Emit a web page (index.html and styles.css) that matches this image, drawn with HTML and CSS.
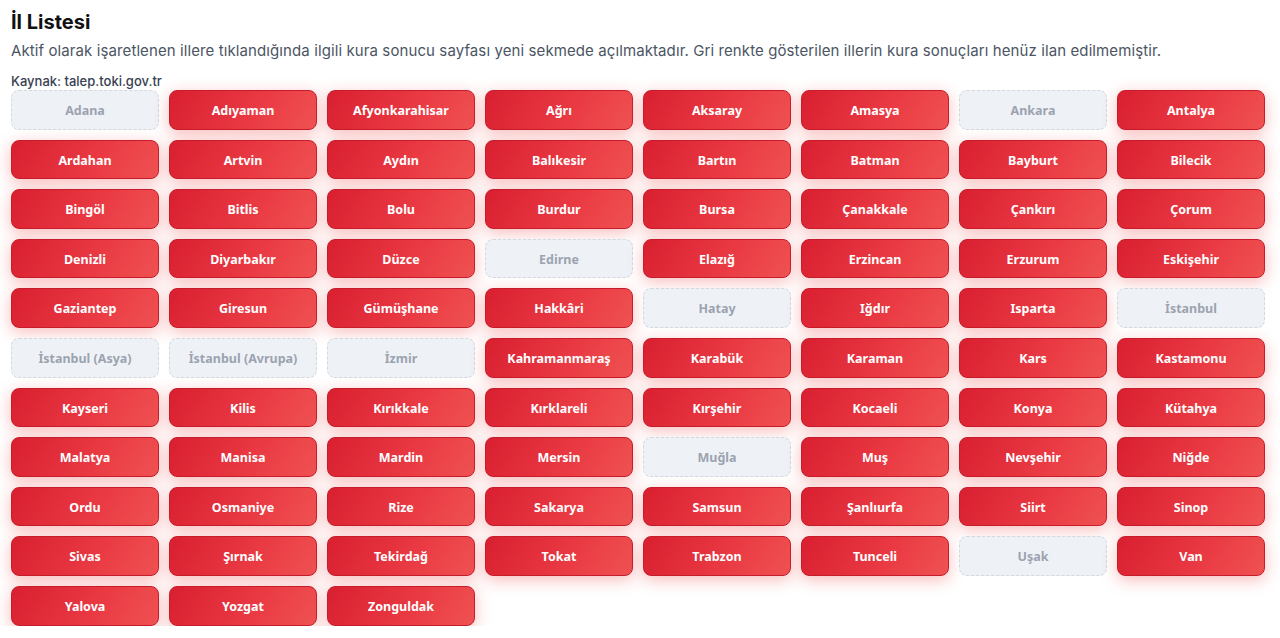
FILE: index.html
```html
<!DOCTYPE html>
<html lang="tr">
<head>
<meta charset="utf-8">
<title>İl Listesi</title>
<link rel="stylesheet" href="styles.css">
</head>
<body>
<div class="page">
  <h2 class="title">İl Listesi</h2>
  <p class="desc">Aktif olarak işaretlenen illere tıklandığında ilgili kura sonucu sayfası yeni sekmede açılmaktadır. Gri renkte gösterilen illerin kura sonuçları henüz ilan edilmemiştir.</p>
  <p class="source">Kaynak: talep.toki.gov.tr</p>
  <div class="grid">
    <span class="city off">Adana</span>
    <a class="city on">Adıyaman</a>
    <a class="city on">Afyonkarahisar</a>
    <a class="city on">Ağrı</a>
    <a class="city on">Aksaray</a>
    <a class="city on">Amasya</a>
    <span class="city off">Ankara</span>
    <a class="city on">Antalya</a>
    <a class="city on">Ardahan</a>
    <a class="city on">Artvin</a>
    <a class="city on">Aydın</a>
    <a class="city on">Balıkesir</a>
    <a class="city on">Bartın</a>
    <a class="city on">Batman</a>
    <a class="city on">Bayburt</a>
    <a class="city on">Bilecik</a>
    <a class="city on">Bingöl</a>
    <a class="city on">Bitlis</a>
    <a class="city on">Bolu</a>
    <a class="city on">Burdur</a>
    <a class="city on">Bursa</a>
    <a class="city on">Çanakkale</a>
    <a class="city on">Çankırı</a>
    <a class="city on">Çorum</a>
    <a class="city on">Denizli</a>
    <a class="city on">Diyarbakır</a>
    <a class="city on">Düzce</a>
    <span class="city off">Edirne</span>
    <a class="city on">Elazığ</a>
    <a class="city on">Erzincan</a>
    <a class="city on">Erzurum</a>
    <a class="city on">Eskişehir</a>
    <a class="city on">Gaziantep</a>
    <a class="city on">Giresun</a>
    <a class="city on">Gümüşhane</a>
    <a class="city on">Hakkâri</a>
    <span class="city off">Hatay</span>
    <a class="city on">Iğdır</a>
    <a class="city on">Isparta</a>
    <span class="city off">İstanbul</span>
    <span class="city off">İstanbul (Asya)</span>
    <span class="city off">İstanbul (Avrupa)</span>
    <span class="city off">İzmir</span>
    <a class="city on">Kahramanmaraş</a>
    <a class="city on">Karabük</a>
    <a class="city on">Karaman</a>
    <a class="city on">Kars</a>
    <a class="city on">Kastamonu</a>
    <a class="city on">Kayseri</a>
    <a class="city on">Kilis</a>
    <a class="city on">Kırıkkale</a>
    <a class="city on">Kırklareli</a>
    <a class="city on">Kırşehir</a>
    <a class="city on">Kocaeli</a>
    <a class="city on">Konya</a>
    <a class="city on">Kütahya</a>
    <a class="city on">Malatya</a>
    <a class="city on">Manisa</a>
    <a class="city on">Mardin</a>
    <a class="city on">Mersin</a>
    <span class="city off">Muğla</span>
    <a class="city on">Muş</a>
    <a class="city on">Nevşehir</a>
    <a class="city on">Niğde</a>
    <a class="city on">Ordu</a>
    <a class="city on">Osmaniye</a>
    <a class="city on">Rize</a>
    <a class="city on">Sakarya</a>
    <a class="city on">Samsun</a>
    <a class="city on">Şanlıurfa</a>
    <a class="city on">Siirt</a>
    <a class="city on">Sinop</a>
    <a class="city on">Sivas</a>
    <a class="city on">Şırnak</a>
    <a class="city on">Tekirdağ</a>
    <a class="city on">Tokat</a>
    <a class="city on">Trabzon</a>
    <a class="city on">Tunceli</a>
    <span class="city off">Uşak</span>
    <a class="city on">Van</a>
    <a class="city on">Yalova</a>
    <a class="city on">Yozgat</a>
    <a class="city on">Zonguldak</a>
  </div>
</div>
</body>
</html>
```
FILE: styles.css
```css
html, body {
  margin: 0;
  padding: 0;
  background: #ffffff;
}
.page {
  width: 1254px;
  padding: 8px 15px 0 11px;
  font-family: "Inter", "Noto Sans", sans-serif;
}
.title {
  margin: 0;
  font-size: 20px;
  line-height: 28px;
  font-weight: 700;
  color: #111111;
}
.desc {
  margin: 4px 0 0;
  font-size: 15px;
  line-height: 22px;
  letter-spacing: 0.1px;
  color: #4b5563;
}
.source {
  margin: 10px 0 0;
  font-size: 13px;
  line-height: 18px;
  font-weight: 500;
  color: #374151;
}
.grid {
  margin-top: 0;
  display: grid;
  grid-template-columns: repeat(8, 148px);
  column-gap: 10px;
  row-gap: 10px;
}
.city {
  display: block;
  box-sizing: border-box;
  height: 39.6px;
  padding: 10px 4px;
  border-radius: 8px;
  font-family: "Noto Sans", "Open Sans", sans-serif;
  font-size: 12.5px;
  line-height: 19.6px;
  font-weight: 700;
  text-align: center;
  text-decoration: none;
  white-space: nowrap;
}
.on {
  color: #ffffff;
  background: linear-gradient(120deg, #d91f30 0%, #ea3b44 60%, #ef5252 100%);
  border: 1px solid #c51d2c;
  box-shadow: 0 4px 16px rgba(239, 68, 68, 0.36);
}
.off {
  color: #9ca3af;
  background: #eef2f7;
  border: 1px dashed #d3d8df;
}
```
